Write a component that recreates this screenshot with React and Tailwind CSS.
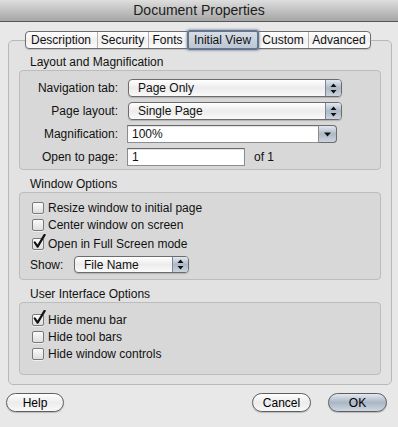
import React from 'react';

// Mac OS X "Document Properties" sheet, Initial View tab

const tabs = [
  { label: 'Description', w: 'w-[71px]' },
  { label: 'Security', w: 'w-[51px]' },
  { label: 'Fonts', w: 'w-[39px]' },
  { label: 'Initial View', w: 'w-[72px]', active: true },
  { label: 'Custom', w: 'w-[49px]' },
  { label: 'Advanced', w: 'w-[62px]' },
];

function UpDown() {
  return (
    <svg width="7" height="11" viewBox="0 0 7 11" aria-hidden="true">
      <path d="M3.5 0.5 L6.5 4 L0.5 4 Z" fill="#111" />
      <path d="M0.5 7 L6.5 7 L3.5 10.5 Z" fill="#111" />
    </svg>
  );
}

function Down() {
  return (
    <svg width="7" height="5" viewBox="0 0 7 5" aria-hidden="true">
      <path d="M0 0.5 L7 0.5 L3.5 4.5 Z" fill="#111" />
    </svg>
  );
}

function Popup({ value, className }) {
  return (
    <div
      className={`flex items-stretch overflow-hidden rounded-[4px] border border-[#6c6c6c] bg-linear-to-b from-white via-[#ececec] to-[#fafafa] shadow-[0_1px_1px_rgba(0,0,0,0.18)] ${className}`}
    >
      <div className="flex flex-1 items-center pl-[9px] leading-none">{value}</div>
      <div className="flex w-[16px] items-center justify-center border-l border-[#7c8694] bg-linear-to-b from-[#e4e9ef] via-[#aeb9c7] to-[#cbd4de]">
        <UpDown />
      </div>
    </div>
  );
}

function Checkbox({ label, checked }) {
  return (
    <div className="flex h-[17px] items-center gap-[4px]">
      <div className="relative h-[12px] w-[12px] rounded-[2px] border border-[#7a7a7a] bg-linear-to-b from-[#fbfbfb] to-[#dedede] shadow-[0_1px_0_rgba(255,255,255,0.6)]">
        {checked && (
          <svg
            className="absolute left-[0px] top-[-5px]"
            width="13"
            height="15"
            viewBox="0 0 13 15"
            aria-hidden="true"
          >
            <path
              d="M1.8 8.5 L4.6 12.6 L11.6 0.9"
              fill="none"
              stroke="#111"
              strokeWidth="2.2"
              strokeLinecap="round"
              strokeLinejoin="round"
            />
          </svg>
        )}
      </div>
      <span>{label}</span>
    </div>
  );
}

function PushButton({ label, primary, className }) {
  return (
    <button
      className={`flex h-[19px] items-center justify-center rounded-full border border-[#5e5e5e] text-[12px] leading-none text-black shadow-[0_1px_1px_rgba(0,0,0,0.2)] ${
        primary
          ? 'bg-linear-to-b from-[#e2e8ef] via-[#aab6c5] to-[#ced7e1]'
          : 'bg-linear-to-b from-white via-[#ececec] to-[#f8f8f8]'
      } ${className}`}
    >
      {label}
    </button>
  );
}

export default function App() {
  return (
    <div className="h-[427px] w-[398px] overflow-hidden bg-[#e8e8e8] font-['Liberation_Sans',Arial,sans-serif] text-[12px] text-[#111]">
      {/* Title bar */}
      <div className="flex h-[22px] items-center justify-center border-b border-[#575757] bg-linear-to-b from-[#dedede] to-[#a6a6a6] text-[14px] text-[#1c1c1c]">
        Document Properties
      </div>

      <div className="pt-[9px]">
        {/* Segmented tabs */}
        <div className="relative z-10 flex justify-center pr-[3px]">
          <div className="flex h-[18px] rounded-[4px] border border-[#6d6d6d] bg-linear-to-b from-white via-[#f0f0f0] to-[#fbfbfb] shadow-[0_1px_1px_rgba(0,0,0,0.15)]">
            {tabs.map((t, i) => (
              <div
                key={t.label}
                className={`flex items-center justify-center leading-none ${t.w} ${
                  i > 0 && !t.active && !tabs[i - 1].active ? 'border-l border-[#b4b4b4]' : ''
                } ${
                  t.active
                    ? 'relative -my-[2px] rounded-[3px] bg-linear-to-b from-[#d9e0e9] to-[#b9c4d2] shadow-[inset_0_0_0_2px_#65768c,0_0_2px_1px_rgba(80,100,130,0.45)]'
                    : ''
                }`}
              >
                {t.label}
              </div>
            ))}
          </div>
        </div>

        {/* Tab pane */}
        <div className="-mt-[9px] ml-[8px] h-[345px] w-[384px] rounded-[5px] border border-[#b8b8b8] bg-[#e2e2e2] px-[10px] pt-[13px]">
          {/* Layout and Magnification */}
          <div className="h-[16px] pl-[11px] leading-[16px]">Layout and Magnification</div>
          <div className="flex h-[100px] flex-col gap-[5px] rounded-[4px] border border-[#bcbcbc] bg-[#d8d8d8] pt-[8px]">
            <div className="flex h-[18px] items-center">
              <div className="w-[98px] text-right">Navigation tab:</div>
              <Popup value="Page Only" className="ml-[10px] h-[18px] w-[214px]" />
            </div>
            <div className="flex h-[18px] items-center">
              <div className="w-[98px] text-right">Page layout:</div>
              <Popup value="Single Page" className="ml-[10px] h-[18px] w-[214px]" />
            </div>
            <div className="flex h-[18px] items-center">
              <div className="w-[98px] text-right">Magnification:</div>
              <div className="ml-[9px] flex h-[18px] w-[210px] items-stretch">
                <div className="flex flex-1 items-center border border-[#8d8d8d] border-t-[#6a6a6a] bg-white pl-[4px] shadow-[inset_0_1px_1px_rgba(0,0,0,0.12)]">
                  100%
                </div>
                <div className="flex w-[18px] items-center justify-center rounded-r-[4px] border border-l-0 border-[#6c6c6c] bg-linear-to-b from-[#e4e9ef] via-[#aeb9c7] to-[#cbd4de]">
                  <Down />
                </div>
              </div>
            </div>
            <div className="flex h-[18px] items-center">
              <div className="w-[98px] text-right">Open to page:</div>
              <div className="ml-[9px] flex h-[18px] w-[118px] items-center border border-[#8d8d8d] border-t-[#6a6a6a] bg-white pl-[4px] shadow-[inset_0_1px_1px_rgba(0,0,0,0.12)]">
                1
              </div>
              <span className="ml-[9px]">of 1</span>
            </div>
          </div>

          {/* Window Options */}
          <div className="mt-[6px] h-[16px] pl-[11px] leading-[16px]">Window Options</div>
          <div className="flex h-[88px] flex-col rounded-[4px] border border-[#bcbcbc] bg-[#d8d8d8] pl-[12px] pt-[6px]">
            <Checkbox label="Resize window to initial page" />
            <Checkbox label="Center window on screen" />
            <div className="mt-[2px]">
              <Checkbox label="Open in Full Screen mode" checked />
            </div>
            <div className="-ml-[2px] mt-[4px] flex h-[17px] items-center">
              <div className="w-[44px]">Show:</div>
              <Popup value="File Name" className="h-[17px] w-[115px]" />
            </div>
          </div>

          {/* User Interface Options */}
          <div className="mt-[6px] h-[16px] pl-[11px] leading-[16px]">User Interface Options</div>
          <div className="flex h-[73px] flex-col rounded-[4px] border border-[#bcbcbc] bg-[#d8d8d8] pl-[12px] pt-[8px]">
            <Checkbox label="Hide menu bar" checked />
            <Checkbox label="Hide tool bars" />
            <Checkbox label="Hide window controls" />
          </div>
        </div>

        {/* Bottom buttons */}
        <div className="mt-[8px] flex items-center pl-[6px] pr-[11px]">
          <PushButton label="Help" className="w-[58px]" />
          <div className="flex-1" />
          <PushButton label="Cancel" className="w-[59px]" />
          <PushButton label="OK" primary className="ml-[17px] w-[59px]" />
        </div>
      </div>
    </div>
  );
}
